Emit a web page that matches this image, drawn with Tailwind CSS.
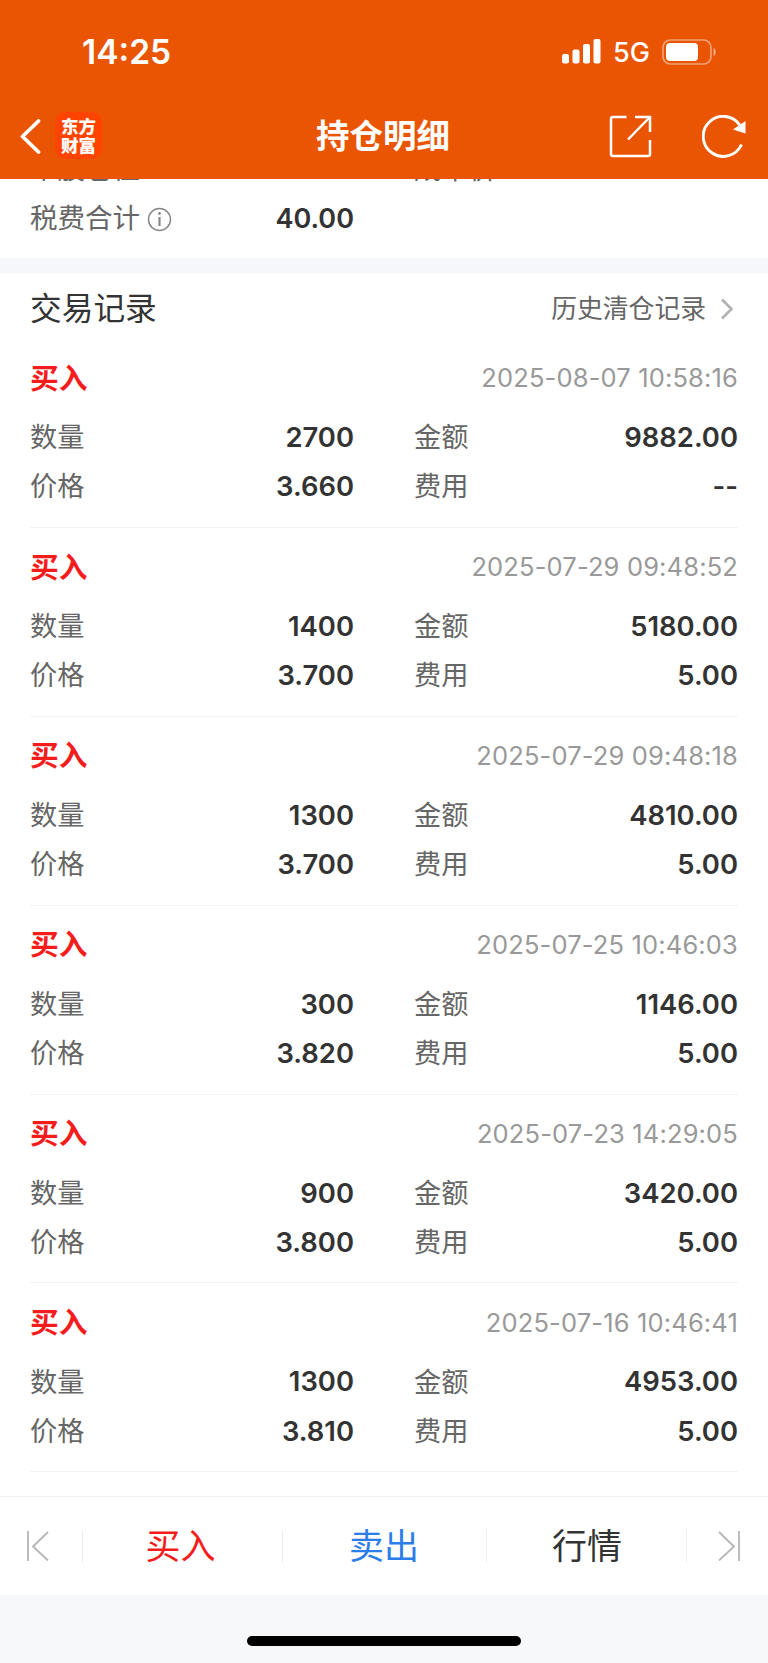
<!DOCTYPE html>
<html lang="zh-CN">
<head>
<meta charset="utf-8">
<title>持仓明细</title>
<script src="https://cdn.jsdelivr.net/npm/@tailwindcss/browser@4"></script>
</head>
<body class="w-[768px] h-[1663px] overflow-hidden bg-white font-['Inter','Noto_Sans_CJK_SC',sans-serif] text-[#666] flex flex-col">
<header class="h-[179px] shrink-0 bg-[#ea5504] text-white flex flex-col relative z-10">
  <div class="h-[103px] flex items-center justify-between pl-[82px] pr-[51px]">
    <span class="text-[33.500px] font-semibold leading-none pt-[2px]">14:25</span>
    <div class="flex items-center">
      <svg width="39" height="25" viewBox="0 0 39 25" fill="#fff"><rect x="0" y="15" width="7" height="9.5" rx="2"/><rect x="10.5" y="10.500" width="7" height="14" rx="2"/><rect x="21" y="5" width="7" height="19.500" rx="2"/><rect x="31.500" y="0" width="7" height="24.500" rx="2"/></svg>
      <span class="ml-[12px] w-[49px] text-[27px] font-medium leading-none pt-px">5G</span>
      <svg width="55" height="26" viewBox="0 0 55 26"><rect x="1" y="1" width="48" height="24" rx="7.500" fill="none" stroke="#fff" stroke-opacity=".45" stroke-width="1.700"/><rect x="4" y="4" width="32" height="18" rx="4" fill="#fff"/><path d="M51.500 9c3 1 3 7 0 8z" fill="#fff" fill-opacity=".5"/></svg>
    </div>
  </div>
  <div class="h-[76px] grid grid-cols-3 items-center pb-[9px] pl-[20px] pr-[22px]">
    <div class="flex items-center gap-[14px] pb-[2px]">
      <svg width="21" height="36" viewBox="0 0 21 36" fill="none" stroke="#fff" stroke-width="3.800" stroke-linecap="round" stroke-linejoin="round"><path d="M18.500 3 2.500 18.500l16 15.500"/></svg>
      <div class="size-[47px] rounded-[10px] bg-[#ff4400] flex items-center justify-center text-center font-['Noto_Sans_CJK_SC',sans-serif] font-black text-[17.500px] leading-[19.500px] pb-px"><span>东方<br>财富</span></div>
    </div>
    <h1 class="text-center text-[33.500px] font-semibold leading-none whitespace-nowrap pt-px">持仓明细</h1>
    <div class="flex items-center justify-end gap-[50px]">
      <svg width="43" height="43" viewBox="0 0 43 43" fill="none" stroke="#fff" stroke-width="2.500"><path d="M17.500 2H4Q2 2 2 4v35q0 2 2 2h35q2 0 2-2V25M26 2h15v15M40 3 19 24.500" stroke-linejoin="miter"/></svg>
      <svg width="44" height="43" viewBox="0 0 44 43"><path d="M39.500 29.500A20 20 0 1 1 38 10.500" fill="none" stroke="#fff" stroke-width="2.900"/><path d="M43.500 6v12.500L31 14.500z" fill="#fff"/></svg>
    </div>
  </div>
</header>

<section class="h-[79px] shrink-0 px-[30px] flex flex-col justify-end pb-[14px] text-[27.500px]">
  <div class="h-[49.500px] shrink-0 grid grid-cols-2 gap-[60px] items-center"><span>个股仓位</span><span>成本价</span></div>
  <div class="h-[49.500px] shrink-0 grid grid-cols-2 gap-[60px] items-center pb-px">
    <div class="flex items-center">
      <span>税费合计</span>
      <svg class="ml-[7px] mt-[2px]" width="25" height="25" viewBox="0 0 25 25" fill="none" stroke="#888" stroke-width="1.500"><circle cx="12.500" cy="12.500" r="11"/><path d="M12.500 10v9" stroke-width="2.200"/><circle cx="12.500" cy="6.500" r="1.400" fill="#888" stroke="none"/></svg>
      <span class="ml-auto text-[#333] font-semibold text-[27px] pt-px">40.00</span>
    </div>
  </div>
</section>
<div class="h-[15px] shrink-0 bg-[#f5f7fa]"></div>

<main class="flex-1 min-h-0 overflow-hidden px-[30px]">
  <div class="h-[66px] flex items-center justify-between pt-[6.500px]">
    <h2 class="text-[31.700px] leading-none text-[#333]">交易记录</h2>
    <div class="flex items-center text-[25.800px] leading-none">历史清仓记录
      <svg class="ml-[14px] mr-[4px]" width="14" height="22" viewBox="0 0 14 22" fill="none" stroke="#b0b0b0" stroke-width="2.500"><path d="M2 1.500 11.500 11 2 20.500"/></svg>
    </div>
  </div>
  <div id="records"></div>
</main>

<nav class="h-[99px] shrink-0 border-t border-[#f0f0f0] flex items-center text-[35px] leading-none">
  <div class="w-[82px] flex justify-center pr-[6px]"><svg width="22" height="30" viewBox="0 0 22 30" fill="none" stroke="#b5b5b5" stroke-width="1.800"><path d="M1 0v30M21 1 6 15.500 21 29.500"/></svg></div>
  <div class="w-[200px] h-[33px] border-l border-[#eee] flex items-center justify-center pr-[4px] text-[#f51c1c]">买入</div>
  <div class="w-[204px] h-[33px] border-l border-[#eee] flex items-center justify-center pr-px text-[#2b7de9]">卖出</div>
  <div class="w-[201px] h-[33px] border-x border-[#eee] flex items-center justify-center pl-px text-[#333]">行情</div>
  <div class="flex-1 flex justify-center pl-[2px]"><svg width="22" height="30" viewBox="0 0 22 30" fill="none" stroke="#b5b5b5" stroke-width="1.800"><path d="M21 0v30M1 1l15 14.500L1 29.500"/></svg></div>
</nav>
<footer class="h-[68px] shrink-0 bg-[#f6f8fa] flex items-end justify-center pb-[17px]"><div class="w-[274px] h-[10px] rounded-full bg-black"></div></footer>

<script>
const records = [
  ["2025-08-07 10:58:16", "2700", "9882.00", "3.660", "--"],
  ["2025-07-29 09:48:52", "1400", "5180.00", "3.700", "5.00"],
  ["2025-07-29 09:48:18", "1300", "4810.00", "3.700", "5.00"],
  ["2025-07-25 10:46:03", "300", "1146.00", "3.820", "5.00"],
  ["2025-07-23 14:29:05", "900", "3420.00", "3.800", "5.00"],
  ["2025-07-16 10:46:41", "1300", "4953.00", "3.810", "5.00"]
];
const cell = (label, value) => `<div class="flex items-center justify-between"><span>${label}</span><span class="font-semibold text-[27.400px] text-[#333]">${value}</span></div>`;
document.getElementById("records").innerHTML = records.map(([time, qty, amount, price, fee]) => `
  <article class="h-[188.900px] border-b border-[#f2f3f4] pt-[12px] leading-none">
    <div class="h-[54px] flex items-center justify-between"><span class="text-[28.700px] font-semibold text-[#f51c1c] pt-[2px]">买入</span><span class="text-[25.500px] tracking-[0.150px] text-[#999]">${time}</span></div>
    <div class="grid grid-cols-2 gap-x-[60px] auto-rows-[49.300px] pt-[8px] text-[27.200px]">
      ${cell("数量", qty)}${cell("金额", amount)}${cell("价格", price)}${cell("费用", fee)}
    </div>
  </article>`).join("");
</script>
</body>
</html>
